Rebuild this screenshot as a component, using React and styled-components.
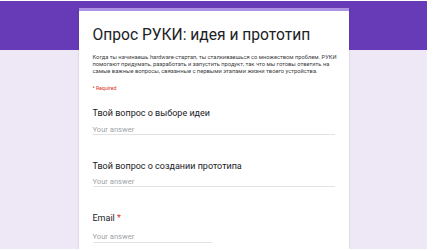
import React from "react";
import styled, { createGlobalStyle } from "styled-components";

const GlobalStyle = createGlobalStyle`
  html, body {
    margin: 0;
    padding: 0;
    background: #ffffff;
  }
  body {
    font-family: Roboto, "Liberation Sans", Arial, sans-serif;
    color: #202124;
  }
`;

const Frame = styled.div`
  margin-top: 1px;
  width: 427px;
  height: 248px;
  overflow: hidden;
  display: flex;
  justify-content: center;
  padding-top: 7px;
  box-sizing: border-box;
  background: linear-gradient(#673ab7 0 49px, #ede7f6 49px);
`;

const Card = styled.main`
  width: 270px;
  box-sizing: border-box;
  background: #ffffff;
  border-top: 3px solid #ab92e2;
  box-shadow: 0 1px 2px rgba(0, 0, 0, 0.15);
  padding: 14px 14px 0;
  display: flex;
  flex-direction: column;
`;

const Title = styled.h1`
  margin: 0;
  font-size: 15.6px;
  line-height: 20px;
  font-weight: 400;
  color: #202124;
  white-space: nowrap;
`;

const Description = styled.p`
  margin: 9px 0 0;
  font-size: 5.75px;
  line-height: 7px;
  color: #3c4043;
  white-space: nowrap;
`;

const Required = styled.div`
  margin-top: 9.5px;
  font-size: 5.2px;
  line-height: 7px;
  color: #d93025;
`;

const Question = styled.section`
  margin-top: ${({ $first }) => ($first ? "15.5px" : "24.8px")};
  display: flex;
  flex-direction: column;
`;

const Label = styled.div`
  font-size: 9px;
  line-height: 12px;
  color: #202124;
  white-space: nowrap;
`;

const Star = styled.span`
  color: #d93025;
`;

const Answer = styled.div`
  margin-top: ${({ $gap }) => $gap}px;
  width: ${({ $narrow }) => ($narrow ? "119px" : "100%")};
  font-size: 7.6px;
  line-height: 9px;
  padding-bottom: ${({ $narrow }) => ($narrow ? "1px" : "0")};
  color: #a0a4a8;
  border-bottom: 1px solid #e3e3e3;
`;

export default function App() {
  return (
    <>
      <GlobalStyle />
      <Frame>
        <Card>
          <Title>Опрос РУКИ: идея и прототип</Title>
          <Description>
            Когда ты начинаешь hardware-стартап, ты сталкиваешься со множеством проблем. РУКИ
            <br />
            помогают придумать, разработать и запустить продукт, так что мы готовы ответить на
            <br />
            самые важные вопросы, связанные с первыми этапами жизни твоего устройства.
          </Description>
          <Required>* Required</Required>

          <Question $first>
            <Label>Твой вопрос о выборе идеи</Label>
            <Answer $gap={6.2}>Your answer</Answer>
          </Question>

          <Question>
            <Label>Твой вопрос о создании прототипа</Label>
            <Answer $gap={4.8}>Your answer</Answer>
          </Question>

          <Question>
            <Label>
              Email <Star>*</Star>
            </Label>
            <Answer $gap={8.5} $narrow>
              Your answer
            </Answer>
          </Question>
        </Card>
      </Frame>
    </>
  );
}
